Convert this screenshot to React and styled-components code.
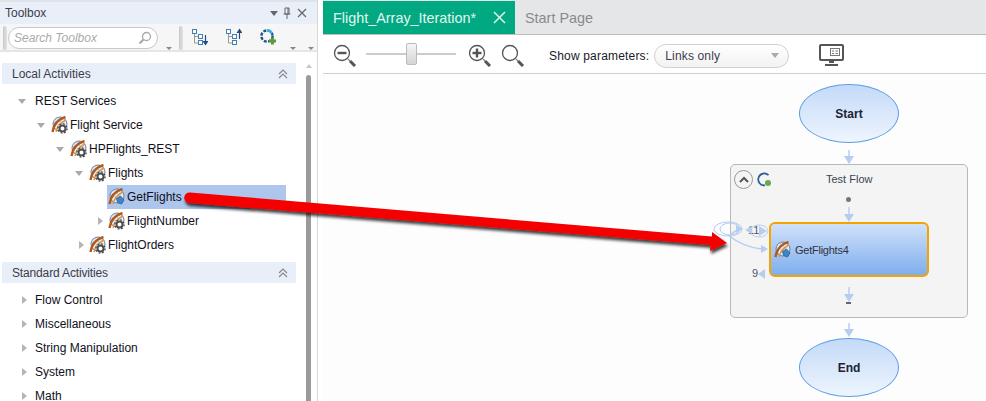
import React from "react";
import styled, { createGlobalStyle } from "styled-components";

const GlobalStyle = createGlobalStyle`
  html, body {
    margin: 0;
    padding: 0;
    background: #ffffff;
    overflow: hidden;
  }
  body {
    font-family: "Liberation Sans", Arial, sans-serif;
    font-size: 12px;
    color: #1a1a2a;
  }
`;

const localTree = [
  { label: "REST Services", depth: 0, open: true, noIcon: true },
  { label: "Flight Service", depth: 1, open: true },
  { label: "HPFlights_REST", depth: 2, open: true },
  { label: "Flights", depth: 3, open: true },
  { label: "GetFlights", depth: 4, leaf: true, selected: true },
  { label: "FlightNumber", depth: 4 },
  { label: "FlightOrders", depth: 3 }
];

const standardTree = ["Flow Control", "Miscellaneous", "String Manipulation", "System", "Math"];

const RestIcon = ({ tag }) => (
  <svg width="17" height="18" viewBox="0 0 17 18">
    <circle cx="9" cy="8" r="7" fill="#e6edf5" stroke="#5f84ab" strokeWidth="1" />
    <path d="M6 2.500c2 1 6 4 7 9M3 7c3 0 7 2 8 7" fill="none" stroke="#a9bdd2" strokeWidth="0.8" />
    <path d="M1.500 16C2.500 9 7 3 14.500 1" fill="none" stroke="#b4581a" strokeWidth="2.400" />
    <path d="M5 16C6 11 9 7 15 4" fill="none" stroke="#dc9142" strokeWidth="1.400" />
    {tag ? (
      <path d="M8.500 10.500l4-2.500 3.500 4-2.500 4-4-1.500z" fill="#3f86c6" stroke="#235d93" strokeWidth="0.8" />
    ) : (
      <g>
        <circle cx="11.500" cy="12.500" r="4.600" fill="#fff" />
        <circle cx="11.500" cy="12.500" r="3" fill="none" stroke="#4d4d4d" strokeWidth="2" />
        <circle cx="11.500" cy="12.500" r="4.600" fill="none" stroke="#4d4d4d" strokeWidth="1.400" strokeDasharray="1.800 1.800" />
      </g>
    )}
  </svg>
);

const ZoomIcon = ({ sign }) => (
  <svg width="24" height="23" viewBox="0 0 24 23">
    <circle cx="9" cy="9" r="7.500" fill="#fff" stroke="#555" strokeWidth="1.300" />
    <path d="M15 15l2 2" stroke="#888" strokeWidth="1.200" />
    <path d="M17 17l5 5" stroke="#555" strokeWidth="3" />
    {sign && <path d="M4.500 9h9" stroke="#555" strokeWidth="2.400" />}
    {sign === "plus" && <path d="M9 4.500v9" stroke="#555" strokeWidth="2.400" />}
  </svg>
);

const TreeDownIcon = ({ up }) => (
  <svg width="16" height="18" viewBox="0 0 16 18">
    <g fill="#fff" stroke="#3f7fb5" strokeWidth="1">
      <rect x="0.500" y="1.500" width="4" height="4" />
      <rect x="6.500" y="6.500" width="4" height="4" />
      <rect x="6.500" y="12.500" width="4" height="4" />
    </g>
    <path d="M2.500 6v9h4M2.500 8.500h4" fill="none" stroke="#999" />
    {up ? (
      <path d="M13.500 11V2M11.500 4.500l2-3 2 3z" stroke="#1f4f80" strokeWidth="1.200" fill="#1f4f80" />
    ) : (
      <path d="M13.500 7v9M11.500 13.500l2 3 2-3z" stroke="#1f4f80" strokeWidth="1.200" fill="#1f4f80" />
    )}
  </svg>
);

const AddActivityIcon = () => (
  <svg width="18" height="18" viewBox="0 0 18 18">
    <circle cx="8" cy="8" r="5.600" fill="none" stroke="#1c4f92" strokeWidth="2.400" strokeDasharray="3 1.400" />
    <path d="M8 2.400a5.600 5.600 0 0 1 5 3" fill="none" stroke="#35b3e6" strokeWidth="2.400" />
    <path d="M10 13h7M13.500 9.500v7" stroke="#5c9a3c" strokeWidth="3" />
  </svg>
);

const MonitorIcon = () => (
  <svg width="26" height="23" viewBox="0 0 26 23">
    <rect x="1" y="1" width="23" height="15" rx="1" fill="#fff" stroke="#555" strokeWidth="2" />
    <rect x="11.500" y="4.500" width="9" height="7" fill="#fff" stroke="#777" />
    <path d="M13 7h2M13 9.500h2M16.500 7h2.500M16.500 9.500h2.500" stroke="#777" />
    <path d="M10 17h5v2h-5zM6 20h13v2H6z" fill="#555" />
  </svg>
);

const Chevrons = () => (
  <svg width="10" height="10" viewBox="0 0 10 10">
    <path d="M1 5l4-4 4 4M1 9l4-4 4 4" fill="none" stroke="#888" strokeWidth="1.200" />
  </svg>
);

const App = () => (
  <Page>
    <GlobalStyle />
    <Toolbox>
      <TitleBar>
        <PanelTitle>Toolbox</PanelTitle>
        <TitleButtons>
          <Caret $size={4} />
          <svg width="10" height="12" viewBox="0 0 10 12">
            <path d="M3 1h4v6H3zM1.500 7h7M5 7v5M6 1v6" fill="none" stroke="#666" />
          </svg>
          <svg width="12" height="12" viewBox="0 0 12 12">
            <path d="M2 2l8 8M10 2l-8 8" stroke="#666" strokeWidth="1.200" />
          </svg>
        </TitleButtons>
      </TitleBar>
      <ToolRow>
        <Grip />
        <SearchBox>
          <span>Search Toolbox</span>
          <svg width="14" height="14" viewBox="0 0 14 14">
            <circle cx="8.500" cy="5.500" r="4" fill="#fff" stroke="#aaa" strokeWidth="1.300" />
            <path d="M5.500 8.500L1.500 12.500" stroke="#aaa" strokeWidth="2.200" />
          </svg>
        </SearchBox>
        <SmallCaret $left={8} />
        <Grip $gap />
        <ToolIcon><TreeDownIcon /></ToolIcon>
        <ToolIcon><TreeDownIcon up /></ToolIcon>
        <ToolIcon><AddActivityIcon /></ToolIcon>
        <SmallCaret $push />
        <SmallCaret $left={12} $right={3} />
      </ToolRow>
      <ToolboxBody>
        <TreeArea>
          <Section>
            <span>Local Activities</span>
            <Chevrons />
          </Section>
          <Tree>
            {localTree.map(node => (
              <TreeRow key={node.label} $depth={node.depth}>
                {node.leaf ? <TwistSpace /> : <Twist $open={node.open} $plain={node.noIcon} />}
                <RowBody $selected={node.selected}>
                  {!node.noIcon && <RestIcon tag={node.leaf} />}
                  <span>{node.label}</span>
                </RowBody>
              </TreeRow>
            ))}
          </Tree>
          <Section $next>
            <Tight>Standard Activities</Tight>
            <Chevrons />
          </Section>
          <Tree>
            {standardTree.map(label => (
              <TreeRow key={label} $depth={0}>
                <Twist $plain />
                <RowBody>
                  <span>{label}</span>
                </RowBody>
              </TreeRow>
            ))}
          </Tree>
        </TreeArea>
        <Scrollbar>
          <ScrollUp />
          <ScrollThumb />
        </Scrollbar>
      </ToolboxBody>
    </Toolbox>
    <Editor>
      <TabBar>
        <ActiveTab>
          <span>Flight_Array_Iteration*</span>
          <svg width="13" height="13" viewBox="0 0 13 13">
            <path d="M1 1l11 11M12 1L1 12" stroke="#d8f3ea" strokeWidth="1.600" />
          </svg>
        </ActiveTab>
        <IdleTab>Start Page</IdleTab>
      </TabBar>
      <CanvasTools>
        <ZoomIcon sign="minus" />
        <Slider>
          <SliderThumb />
        </Slider>
        <ZoomIcon sign="plus" />
        <ZoomFit><ZoomIcon /></ZoomFit>
        <ParamLabel>Show parameters:</ParamLabel>
        <Select>
          <span>Links only</span>
          <Caret $size={4} $color="#aaa" />
        </Select>
        <MonitorWrap><MonitorIcon /></MonitorWrap>
      </CanvasTools>
      <Canvas>
        <Terminal $top={10}>Start</Terminal>
        <Terminal $top={264}>End</Terminal>
        <FlowGroup>
          <GroupHeader>
            <CollapseButton>
              <svg width="10" height="7" viewBox="0 0 10 7">
                <path d="M1 6l4-4 4 4" fill="none" stroke="#555" strokeWidth="2" />
              </svg>
            </CollapseButton>
            <svg width="15" height="15" viewBox="0 0 15 15">
              <path d="M11.500 3.200A6 6 0 1 0 8 13.400" fill="none" stroke="#2a5e92" strokeWidth="1.700" />
              <circle cx="11" cy="11" r="3" fill="#6aa84f" />
            </svg>
            <GroupTitle>Test Flow</GroupTitle>
          </GroupHeader>
          <Activity>
            <RestIcon tag />
            <span>GetFlights4</span>
          </Activity>
          <PortLabel $top={59} $left={17}>11</PortLabel>
          <PortLabel $top={102} $left={21}>9</PortLabel>
        </FlowGroup>
        <Wires width="663" height="327" viewBox="0 0 663 327">
          <g fill="none" stroke="#b5cdf0" strokeWidth="1.500">
            <path d="M526 76v8M526 133v9M526 213v9M526 249v8" />
            <ellipse cx="405" cy="155" rx="14" ry="7" strokeWidth="1" />
            <ellipse cx="407" cy="155" rx="10" ry="6" strokeWidth="1" />
            <path d="M407 161c4-4 8-5 11-6" />
            <path d="M405 161c10 8 21 13 34 14" />
            <ellipse cx="436" cy="157" rx="9" ry="6" strokeWidth="1" />
          </g>
          <g fill="#b5cdf0">
            <path d="M521 82h10l-5 8zM521 255h10l-5 8zM521 140h10l-5 8zM521 220h10l-5 8z" />
            <path d="M420 155l-7-4v8zM422 156l7-4v8zM444 157l-8-5v10zM445 175l-7-4v8zM435 200l7-5v10z" />
          </g>
          <circle cx="525.500" cy="125.500" r="2.500" fill="#777" />
          <rect x="523" y="228" width="5" height="2" fill="#666" />
        </Wires>
      </Canvas>
    </Editor>
    <Callout width="986" height="401" viewBox="0 0 986 401">
      <defs>
        <filter id="arrowShadow" x="-5%" y="-50%" width="110%" height="200%">
          <feDropShadow dx="1" dy="3" stdDeviation="1.800" floodColor="#000" floodOpacity="0.75" />
        </filter>
      </defs>
      <path
        d="M190 192.500L712 236.500L712 232L727 243L710 251L710.500 245L189 203A5 5 0 0 1 190 192.500Z"
        fill="#f40000"
        filter="url(#arrowShadow)"
      />
    </Callout>
  </Page>
);

const Page = styled.div`
  position: relative;
  display: flex;
  width: 986px;
  height: 401px;
  overflow: hidden;
  background: #ffffff;
`;

const Toolbox = styled.div`
  display: flex;
  flex-direction: column;
  width: 318px;
  flex: none;
  padding-top: 2px;
  box-sizing: border-box;
  background: #ffffff;
  border-right: 1px solid #d8d8d8;
  box-shadow: inset 0 2px 0 #dfe3e8;
`;

const TitleBar = styled.div`
  display: flex;
  align-items: center;
  justify-content: space-between;
  height: 22px;
  padding: 0 9px 0 5px;
  background: #e8eff8;
`;

const PanelTitle = styled.div`
  color: #3c3c4c;
  font-size: 12px;
`;

const TitleButtons = styled.div`
  display: flex;
  align-items: center;
  gap: 4px;
`;

const Caret = styled.i`
  display: block;
  width: 0;
  height: 0;
  border-left: ${props => props.$size}px solid transparent;
  border-right: ${props => props.$size}px solid transparent;
  border-top: ${props => props.$size + 1}px solid ${props => props.$color || "#666"};
`;

const SmallCaret = styled.i`
  display: block;
  width: 0;
  height: 0;
  align-self: flex-end;
  margin: 0 ${props => props.$right || 0}px 0 ${props => (props.$push ? "auto" : `${props.$left}px`)};
  border-left: 3px solid transparent;
  border-right: 3px solid transparent;
  border-top: 3px solid #888;
`;

const ToolRow = styled.div`
  display: flex;
  align-items: center;
  height: 28px;
  padding: 2px 0 0 3px;
  box-sizing: border-box;
  background: #f6f6f6;
  border-bottom: 2px solid #e6e6e6;
`;

const Grip = styled.i`
  display: block;
  flex: none;
  width: 4px;
  height: 24px;
  margin-left: ${props => (props.$gap ? "7px" : "0")};
  margin-right: ${props => (props.$gap ? "0" : "1px")};
  border-radius: 2px;
  background: linear-gradient(90deg, #c8c8c8, #e4e4e4);
`;

const SearchBox = styled.div`
  display: flex;
  align-items: center;
  justify-content: space-between;
  width: 150px;
  height: 22px;
  padding: 0 5px;
  box-sizing: border-box;
  border: 1px solid #c8c8c8;
  border-radius: 11px;
  background: #ffffff;
  color: #aaaaaa;
  font-style: italic;
  font-size: 12px;
`;

const ToolIcon = styled.div`
  display: flex;
  justify-content: center;
  width: 34px;
  margin-top: -2px;
`;

const ToolboxBody = styled.div`
  display: flex;
  flex: 1;
  min-height: 0;
`;

const TreeArea = styled.div`
  width: 296px;
  flex: none;
  padding: 11px 0 0 2px;
  box-sizing: border-box;
`;

const Section = styled.div`
  display: flex;
  align-items: center;
  justify-content: space-between;
  height: 21px;
  margin-top: ${props => (props.$next ? "5px" : "0")};
  padding: 0 8px 0 10px;
  background: #e8eff8;
  color: #3c3c4c;
`;

const Tight = styled.span`
  letter-spacing: -0.15px;
`;

const Tree = styled.div`
  display: flex;
  flex-direction: column;
  padding-top: 5px;
`;

const TreeRow = styled.div`
  display: flex;
  align-items: center;
  flex: none;
  height: 24px;
  padding-left: ${props => 16 + props.$depth * 19}px;
`;

const Twist = styled.i`
  display: block;
  flex: none;
  width: 0;
  height: 0;
  ${props =>
    props.$open
      ? `
    margin: 1px ${props.$plain ? 9 : 6}px 0 0;
    border-left: 4px solid transparent;
    border-right: 4px solid transparent;
    border-top: 5px solid #aaaaaa;
  `
      : `
    margin: 0 ${props.$plain ? 8 : 5}px 0 4px;
    border-top: 4px solid transparent;
    border-bottom: 4px solid transparent;
    border-left: 5px solid #b4b4b4;
  `}
`;

const TwistSpace = styled.i`
  display: block;
  flex: none;
  width: 13px;
`;

const RowBody = styled.div`
  display: flex;
  align-items: center;
  gap: 2px;
  height: 24px;
  flex: none;
  width: ${props => (props.$selected ? "179px" : "auto")};
  padding-left: ${props => (props.$selected ? "1px" : "0")};
  box-sizing: border-box;
  background: ${props => (props.$selected ? "#aec6ec" : "transparent")};
  color: #101020;
  white-space: nowrap;
`;

const Scrollbar = styled.div`
  display: flex;
  flex-direction: column;
  align-items: center;
  width: 21px;
  flex: none;
  padding-top: 12px;
  margin-left: 2px;
`;

const ScrollUp = styled.i`
  display: block;
  width: 0;
  height: 0;
  margin: 0 0 7px;
  border-left: 3px solid transparent;
  border-right: 3px solid transparent;
  border-bottom: 4px solid #c8c8c8;
`;

const ScrollThumb = styled.div`
  width: 5px;
  flex: 1;
  border-radius: 3px 3px 0 0;
  background: #9a9a9a;
`;

const Editor = styled.div`
  display: flex;
  flex-direction: column;
  flex: 1;
  min-width: 0;
  margin-left: 5px;
`;

const TabBar = styled.div`
  display: flex;
  height: 35px;
  flex: none;
  padding-top: 1px;
  box-sizing: border-box;
  background: #e5e6e8;
  border-bottom: 1px solid #bcbcbc;
`;

const ActiveTab = styled.div`
  display: flex;
  align-items: center;
  justify-content: space-between;
  width: 192px;
  padding: 0 9px 0 10px;
  box-sizing: border-box;
  background: #01a982;
  color: #e4f6f0;
  font-size: 14.4px;
`;

const IdleTab = styled.div`
  display: flex;
  align-items: center;
  padding-left: 10px;
  color: #8a8a8a;
  font-size: 14.4px;
`;

const CanvasTools = styled.div`
  display: flex;
  align-items: center;
  flex: none;
  height: 39px;
  padding: 3px 0 0 10px;
  box-sizing: border-box;
  background: #ffffff;
  border-bottom: 1px solid #cfcfcf;
`;

const Slider = styled.div`
  position: relative;
  width: 90px;
  height: 2px;
  margin: -4px 12px 0 9px;
  background: #cccccc;
`;

const SliderThumb = styled.div`
  position: absolute;
  left: 40px;
  top: -10px;
  width: 11px;
  height: 22px;
  box-sizing: border-box;
  border: 1px solid #bbbbbb;
  border-radius: 2px;
  background: linear-gradient(#f6f6f6, #d4d4d4);
`;

const ZoomFit = styled.div`
  display: flex;
  margin-left: 9px;
`;

const ParamLabel = styled.div`
  margin-left: 24px;
  color: #1a1a2a;
  letter-spacing: 0.18px;
  white-space: nowrap;
`;

const Select = styled.div`
  display: flex;
  align-items: center;
  justify-content: space-between;
  width: 135px;
  height: 24px;
  margin-left: 5px;
  padding: 0 9px 0 10px;
  box-sizing: border-box;
  border: 1px solid #d0d0d0;
  border-radius: 12px;
  background: linear-gradient(#ffffff, #f2f2f2);
  color: #3c3c4c;
  letter-spacing: 0.15px;
`;

const MonitorWrap = styled.div`
  display: flex;
  margin-left: 30px;
`;

const Canvas = styled.div`
  position: relative;
  flex: 1;
  background: #fdfdfd;
`;

const Terminal = styled.div`
  position: absolute;
  left: 476px;
  top: ${props => props.$top}px;
  display: flex;
  align-items: center;
  justify-content: center;
  width: 100px;
  height: 59px;
  box-sizing: border-box;
  border: 1px solid #5c9ee6;
  border-radius: 50%;
  background: linear-gradient(#c4daf8, #eef5fe);
  color: #222233;
  font-weight: bold;
`;

const FlowGroup = styled.div`
  position: absolute;
  left: 407px;
  top: 90px;
  width: 238px;
  height: 154px;
  box-sizing: border-box;
  border: 1px solid #b8b8b8;
  border-radius: 5px;
  background: #f4f4f4;
`;

const GroupHeader = styled.div`
  display: flex;
  align-items: center;
  gap: 4px;
  height: 26px;
  padding: 1px 0 0 3px;
`;

const CollapseButton = styled.div`
  display: flex;
  align-items: center;
  justify-content: center;
  width: 19px;
  height: 19px;
  box-sizing: border-box;
  border: 1px solid #999999;
  border-radius: 50%;
  background: #f4f4f4;
`;

const GroupTitle = styled.div`
  margin-left: 50px;
  color: #3c4450;
  font-size: 11px;
`;

const Activity = styled.div`
  position: absolute;
  left: 38px;
  top: 57px;
  display: flex;
  align-items: center;
  gap: 4px;
  width: 160px;
  height: 55px;
  padding-left: 3px;
  box-sizing: border-box;
  border: 2px solid #f5a300;
  border-radius: 6px;
  background: linear-gradient(#d0e1f9, #7eaeee);
  color: #333344;
  font-size: 11px;
  letter-spacing: -0.25px;
`;

const PortLabel = styled.div`
  position: absolute;
  left: ${props => props.$left}px;
  top: ${props => props.$top}px;
  color: #555560;
  font-size: 11px;
`;

const Wires = styled.svg`
  position: absolute;
  left: 0;
  top: 0;
  pointer-events: none;
`;

const Callout = styled.svg`
  position: absolute;
  left: 0;
  top: 0;
  pointer-events: none;
`;

export default App;
